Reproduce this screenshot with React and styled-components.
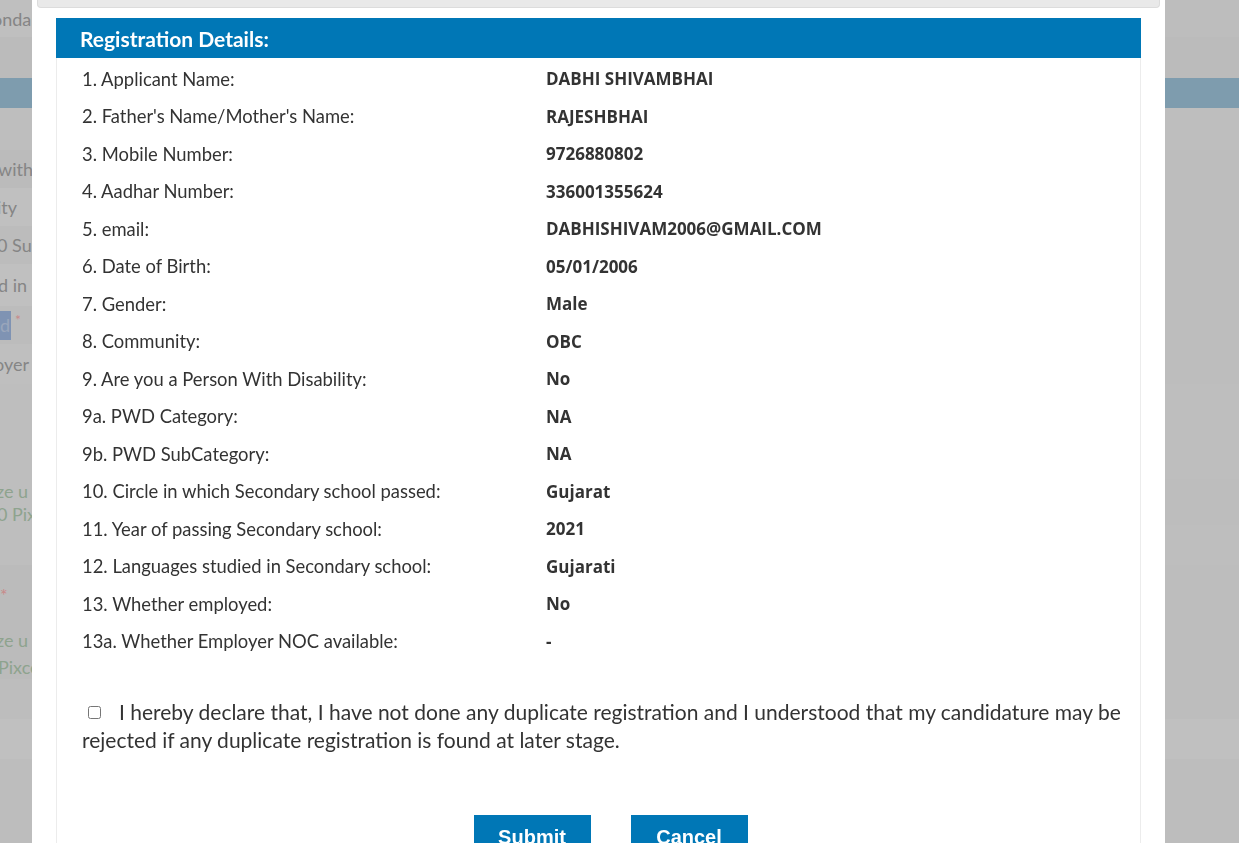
import React from "react";
import styled, { createGlobalStyle } from "styled-components";

const Global = createGlobalStyle`
  html, body { margin: 0; padding: 0; }
  body { background: #bdbdbd; overflow: hidden; font-family: "Open Sans", sans-serif; }
`;

const Page = styled.div`
  height: 843px;
  display: flex;
  flex-direction: column;
  overflow: hidden;
`;

const BgRow = styled.div`
  height: ${(p) => p.h}px;
  background: ${(p) => p.bg || "#bdbdbd"};
  display: flex;
  align-items: center;
  overflow: hidden;
  width: 32px;
  flex-shrink: 0;
`;

const BgBand = styled.div`
  height: ${(p) => p.h}px;
  background: ${(p) => p.bg || "#bdbdbd"};
  flex-shrink: 0;
  display: flex;
`;

const BgText = styled.span`
  white-space: nowrap;
  font-family: "Lato", sans-serif;
  font-size: 18px;
  color: ${(p) => p.c || "#858585"};
  margin-left: ${(p) => p.shift}px;
`;

const Hl = styled.span`
  display: inline-block;
  background: #7f93b3;
  color: #9aa6bb;
  padding: 3px 1px 4px 4px;
`;

const Star = styled.span`
  color: #c98a8a;
  font-size: 14px;
  vertical-align: top;
  margin-left: 4px;
`;

const Modal = styled.div`
  position: fixed;
  top: 0;
  left: 32px;
  width: 1133px;
  bottom: 0;
  background: #fff;
  padding: 0 24px;
  box-sizing: border-box;
  display: flex;
  flex-direction: column;
`;

const TopBar = styled.div`
  flex-shrink: 0;
  height: 7px;
  margin: 0 -19px;
  background: #e9e9e9;
  border: 1px solid #dcdcdc;
  border-top: none;
  border-radius: 0 0 4px 4px;
`;

const Panel = styled.div`
  flex-shrink: 0;
  margin-top: 10px;
  border-left: 1px solid #ececec;
  border-right: 1px solid #ececec;
  flex: 1;
  display: flex;
  flex-direction: column;
`;

const Header = styled.div`
  flex-shrink: 0;
  height: 40px;
  margin: 0 -1px;
  background: #0077b6;
  color: #fff;
  font-family: "Lato", sans-serif;
  font-weight: 700;
  font-size: 21px;
  display: flex;
  align-items: center;
  padding-left: 24px;
`;

const Body = styled.div`
  flex-shrink: 0;
  padding: 2px 18px 0 25px;
  display: flex;
  flex-direction: column;
`;

const Row = styled.div`
  height: 37.5px;
  display: grid;
  grid-template-columns: 464px 1fr;
  align-items: center;
  color: #333;
`;

const Label = styled.span`
  font-family: "Lato", sans-serif;
  font-size: 18.4px;
`;

const Value = styled.span`
  font-family: "Open Sans", sans-serif;
  font-weight: 700;
  font-size: 17px;
`;

const Declare = styled.label`
  margin-top: 38px;
  font-family: "Lato", sans-serif;
  font-size: 21px;
  line-height: 28px;
  color: #333;
  display: block;
`;

const Check = styled.input`
  width: 13px;
  height: 13px;
  margin: 0 18px 0 6px;
  vertical-align: 1px;
`;

const Actions = styled.div`
  flex-shrink: 0;
  margin-top: 61px;
  display: flex;
  justify-content: center;
  gap: 40px;
  padding-left: 24px;
`;

const Button = styled.button`
  width: 117px;
  height: 44px;
  border: none;
  background: #0077b6;
  color: #fff;
  font-family: "Liberation Sans", Arial, sans-serif;
  font-weight: 700;
  font-size: 20px;
  padding-top: 2px;
`;

const rows = [
  ["1. Applicant Name:", "DABHI SHIVAMBHAI"],
  ["2. Father's Name/Mother's Name:", "RAJESHBHAI"],
  ["3. Mobile Number:", "9726880802"],
  ["4. Aadhar Number:", "336001355624"],
  ["5. email:", "DABHISHIVAM2006@GMAIL.COM"],
  ["6. Date of Birth:", "05/01/2006"],
  ["7. Gender:", "Male"],
  ["8. Community:", "OBC"],
  ["9. Are you a Person With Disability:", "No"],
  ["9a. PWD Category:", "NA"],
  ["9b. PWD SubCategory:", "NA"],
  ["10. Circle in which Secondary school passed:", "Gujarat"],
  ["11. Year of passing Secondary school:", "2021"],
  ["12. Languages studied in Secondary school:", "Gujarati"],
  ["13. Whether employed:", "No"],
  ["13a. Whether Employer NOC available:", "-"],
];

export default function App() {
  return (
    <>
      <Global />
      <Page>
        <BgRow h={37} bg="#bfbfbf"><BgText shift={-8}>ondary</BgText></BgRow>
        <BgBand h={41} bg="#bbbbbb" />
        <BgBand h={30} bg="#7e9cae" />
        <BgBand h={42} bg="#bebebe" />
        <BgRow h={38} bg="#bbbbbb"><BgText shift={-2}>with</BgText></BgRow>
        <BgRow h={38} bg="#c0c0c0"><BgText shift={-3}>ity</BgText></BgRow>
        <BgRow h={38} bg="#bcbcbc"><BgText shift={-3}>0 Subject</BgText></BgRow>
        <BgRow h={42} bg="#c0c0c0"><BgText shift={-2}>d in Sec</BgText></BgRow>
        <BgRow h={38} bg="#bcbcbc"><BgText shift={-4}><Hl>d</Hl><Star>*</Star></BgText></BgRow>
        <BgRow h={40} bg="#bfbfbf"><BgText shift={-6}>oyer</BgText></BgRow>
        <BgBand h={95} bg="#bebebe" />
        <BgRow h={23} bg="#bebebe"><BgText shift={-4} c="#8ea38e">ze u</BgText></BgRow>
        <BgRow h={23} bg="#bebebe"><BgText shift={-3} c="#8ea38e">0 Pixel</BgText></BgRow>
        <BgBand h={40} bg="#bebebe" />
        <BgRow h={60} bg="#bbbbbb"><BgText c="#c98a8a" shift={0}>*</BgText></BgRow>
        <BgRow h={30} bg="#bbbbbb"><BgText shift={-4} c="#8ea38e">ze u</BgText></BgRow>
        <BgRow h={24} bg="#bbbbbb"><BgText shift={-2} c="#8ea38e">Pixcel</BgText></BgRow>
        <BgBand h={40} bg="#bdbdbd" />
        <BgBand h={40} bg="#c0c0c0" />
        <BgBand h={40} bg="#bdbdbd" />
      </Page>
      <Modal>
        <TopBar />
        <Panel>
          <Header>Registration Details:</Header>
          <Body>
            {rows.map(([l, v]) => (
              <Row key={l}>
                <Label>{l}</Label>
                <Value>{v}</Value>
              </Row>
            ))}
            <Declare>
              <Check type="checkbox" />
              I hereby declare that, I have not done any duplicate registration and I understood that my candidature may be rejected if any duplicate registration is found at later stage.
            </Declare>
          </Body>
          <Actions>
            <Button>Submit</Button>
            <Button>Cancel</Button>
          </Actions>
        </Panel>
      </Modal>
    </>
  );
}
